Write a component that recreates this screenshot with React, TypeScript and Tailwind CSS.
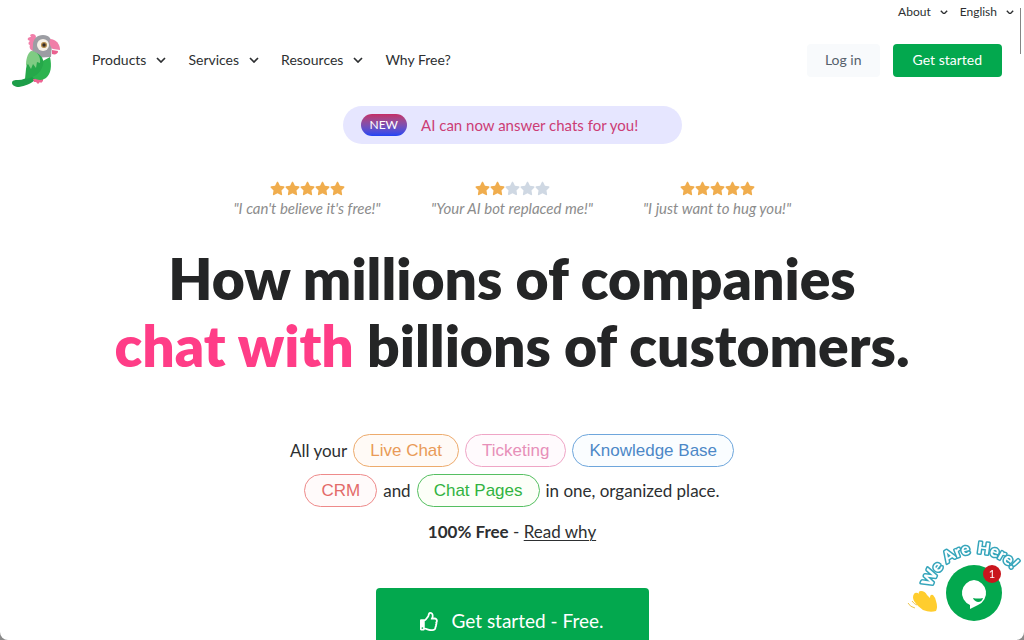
import clsx from "clsx";
import { FaRegThumbsUp, FaStar } from "react-icons/fa";

const navItems = [
  { label: "Products", menu: true },
  { label: "Services", menu: true },
  { label: "Resources", menu: true },
  { label: "Why Free?", menu: false },
];

const reviews = [
  { text: "\"I can't believe it's free!\"", stars: 5 },
  { text: '"Your AI bot replaced me!"', stars: 2 },
  { text: '"I just want to hug you!"', stars: 5 },
];

const greeting = [
  { word: "We", offset: 0 },
  { word: "Are", offset: 29 },
  { word: "Here!", offset: 61 },
];

function Chevron({ className }: { className?: string }) {
  return (
    <svg viewBox="0 0 10 6" className={clsx("shrink-0", className)} aria-hidden="true">
      <path d="M1 1l4 4 4-4" fill="none" stroke="currentColor" strokeWidth="1.7" />
    </svg>
  );
}

function ParrotLogo() {
  return (
    <svg viewBox="0 0 50 54" className="h-[54px] w-[50px]" aria-hidden="true">
      <path d="M20 42c-5 3-8 5-13 5-3 0-6 0-6 3 0 2 3 4 7 4 6-1 12-3 17-8z" fill="#1d9e49" />
      <path d="M22 46l10-1 0 3-2 2-1-1-2 2-2-2-2 0z" fill="#ed6593" />
      <path d="M25 4c0-3-4-4-6-2l1 2c-2 0-4 1-3 3l2 1c-2 1-2 4 0 4-1 2 0 5 3 6z" fill="#f17faa" />
      <path d="M22 12c0-6 4-10 10-10 6 0 9 4 9 10l-1 12-19 1z" fill="#9c9da3" />
      <path d="M39 6c6 0 10 5 10 11l-7-1c-3-2-4-6-3-10z" fill="#f07fa8" />
      <path d="M41 17l6 1c0 3-3 4-6 3z" fill="#ea608f" />
      <path d="M22 24l8 5 9-5c2 9 1 17-4 21-4 3-9 2-13 0-3-5-3-15 0-21z" fill="#2cb34f" />
      <path d="M20 19c-3 5-4 11-5 17l-1 10c9-1 16-6 18-14 2-7-4-13-12-13z" fill="#26a84a" />
      <path d="M20 18c6 0 10 5 9 12l-3-1-1 6-3-4-2 5-3-5-2 2c0-6 1-12 5-15z" fill="#7fcb83" />
      <circle cx="32" cy="12" r="6" fill="#f6f1e8" />
      <circle cx="33" cy="12" r="3" fill="#b28a49" />
      <circle cx="33" cy="12" r="1.7" fill="#342c29" />
    </svg>
  );
}

function Header() {
  return (
    <header className="pr-[22px] pl-[11px]">
      <div className="-mr-3 flex h-6 items-center justify-end gap-3 text-xs">
        <button type="button" className="flex items-center gap-[9px]">
          About
          <Chevron className="w-2" />
        </button>
        <button type="button" className="flex items-center gap-[9px]">
          English
          <Chevron className="w-2" />
        </button>
      </div>

      <div className="flex h-[72px] items-center justify-between">
        <div className="flex items-center gap-[31px]">
          <a href="#home" aria-label="Home">
            <ParrotLogo />
          </a>
          <nav className="flex items-center gap-[22px] text-sm">
            {navItems.map((item) =>
              item.menu ? (
                <button key={item.label} type="button" className="flex items-center gap-2.5">
                  {item.label}
                  <Chevron className="w-2.5" />
                </button>
              ) : (
                <a key={item.label} href="#why-free">
                  {item.label}
                </a>
              ),
            )}
          </nav>
        </div>

        <div className="flex items-center gap-[13px] text-sm">
          <button type="button" className="h-[33px] rounded bg-[#f8fafc] px-[18px] text-[#56616c]">
            Log in
          </button>
          <button type="button" className="h-[33px] rounded bg-[#03a84e] px-5 text-white">
            Get started
          </button>
        </div>
      </div>
    </header>
  );
}

function Reviews() {
  return (
    <div className="mt-[37px] grid grid-cols-[repeat(3,205px)] justify-center">
      {reviews.map((review) => (
        <figure key={review.text} className="flex flex-col items-center">
          <div className="flex" role="img" aria-label={`${review.stars} out of 5`}>
            {[1, 2, 3, 4, 5].map((n) => (
              <FaStar
                key={n}
                className={clsx("size-[15px]", n <= review.stars ? "text-[#f0ad4e]" : "text-[#cfd8e3]")}
              />
            ))}
          </div>
          <figcaption className="text-[15px] leading-6 text-[#8c8c8c] italic">{review.text}</figcaption>
        </figure>
      ))}
    </div>
  );
}

function Pill({ label, color }: { label: string; color: string }) {
  return (
    <a
      href="#features"
      className={clsx(
        "flex h-[33px] items-center rounded-full border px-4 font-['Liberation_Sans',Arial,sans-serif] text-[17px]",
        color,
      )}
    >
      {label}
    </a>
  );
}

function Hero() {
  return (
    <main className="flex flex-col items-center pt-2.5">
      <a href="#ai" className="flex h-[38px] w-[339px] items-center gap-3.5 rounded-full bg-[#e6e6ff] pl-[18px]">
        <span className="flex h-[22px] items-center rounded-full bg-linear-to-b from-[#c42c66] to-[#1d42f5] px-[9px] text-xs text-white">
          NEW
        </span>
        <span className="text-[15px] text-[#cc3d75]">AI can now answer chats for you!</span>
      </a>

      <Reviews />

      <h1 className="mt-[25px] text-center text-[57px] leading-[67px] font-extrabold text-[#242526]">
        How millions of companies
        <br />
        <span className="text-[#ff3d87]">chat with</span> billions of customers.
      </h1>

      <div className="mt-[55px] flex flex-col items-center gap-[7px] text-[17px]">
        <div className="flex items-center gap-1.5">
          <span>All your</span>
          <Pill label="Live Chat" color="border-[#edab6d] bg-[#fffaf6] text-[#e99a58]" />
          <Pill label="Ticketing" color="border-[#efa5c6] bg-[#fffafd] text-[#e78fb9]" />
          <Pill label="Knowledge Base" color="border-[#6ea6dc] bg-[#fafdff] text-[#4d88c7]" />
        </div>
        <div className="flex items-center gap-1.5">
          <Pill label="CRM" color="border-[#ee8a8a] bg-[#fffafa] text-[#e36b69]" />
          <span>and</span>
          <Pill label="Chat Pages" color="border-[#55bf61] bg-[#fcfff8] text-[#31b341]" />
          <span>in one, organized place.</span>
        </div>
      </div>

      <p className="mt-3 text-[17px] leading-[26px]">
        <strong>100% Free</strong> -{" "}
        <a href="#why-free" className="underline decoration-1 underline-offset-2">
          Read why
        </a>
      </p>

      <button
        type="button"
        className="mt-[43px] flex h-[66px] w-[273px] items-center justify-center gap-3 rounded bg-[#03a84e] text-[19px] text-white"
      >
        <FaRegThumbsUp />
        Get started - Free.
      </button>
    </main>
  );
}

function ChatWidget() {
  return (
    <button type="button" aria-label="Open chat" className="fixed right-0 bottom-0">
      <svg viewBox="0 0 130 115" className="h-[115px] w-[130px]">
        <path id="greeting-arc" d="M38 63A46 46 0 0 1 128 67" fill="none" />
        {greeting.map(({ word, offset }) => (
          <text
            key={word}
            className="font-['Lato',sans-serif] text-[16px] font-black [paint-order:stroke]"
            fill="#fff"
            stroke="#35a5bb"
            strokeWidth="3"
            strokeLinejoin="round"
          >
            <textPath href="#greeting-arc" startOffset={offset}>
              {word}
            </textPath>
          </text>
        ))}
        <circle cx="80" cy="68" r="28" fill="#03a84e" />
        <path d="M80 55a13 13 0 0 1 4 25l-8 4 0-4A13 13 0 0 1 80 55z" fill="#fff" />
        <path d="M79 73q5 1 10 0-1 4-5 4-4-1-5-4z" fill="#03a84e" />
        <circle cx="98" cy="49" r="9" fill="#c9161d" />
        <text x="98" y="53" textAnchor="middle" fill="#fff" className="font-['Lato',sans-serif] text-[11px]">
          1
        </text>
        <path
          d="M20 69q1-2 4-1l1 1q-1-3 2-3 4 0 6 4l3 3q0-4 3-3 2 2 3 6 2 6 0 10-6 2-13-1-5-3-9-9-2-4 0-7z"
          fill="#ffcd2e"
        />
        <path d="M14 78q2 4 7 5M18 76q2 3 5 4" fill="none" stroke="#edc44b" strokeWidth="1" />
      </svg>
    </button>
  );
}

export default function App() {
  return (
    <div className="h-screen bg-[#8a8a8a] font-['Lato',sans-serif] text-[#2d2f31]">
      <div className="h-full overflow-hidden rounded-b-lg bg-white">
        <Header />
        <Hero />
      </div>
      <ChatWidget />
      <div className="fixed top-2 right-[3px] h-[46px] w-px bg-[#858585]" />
    </div>
  );
}
